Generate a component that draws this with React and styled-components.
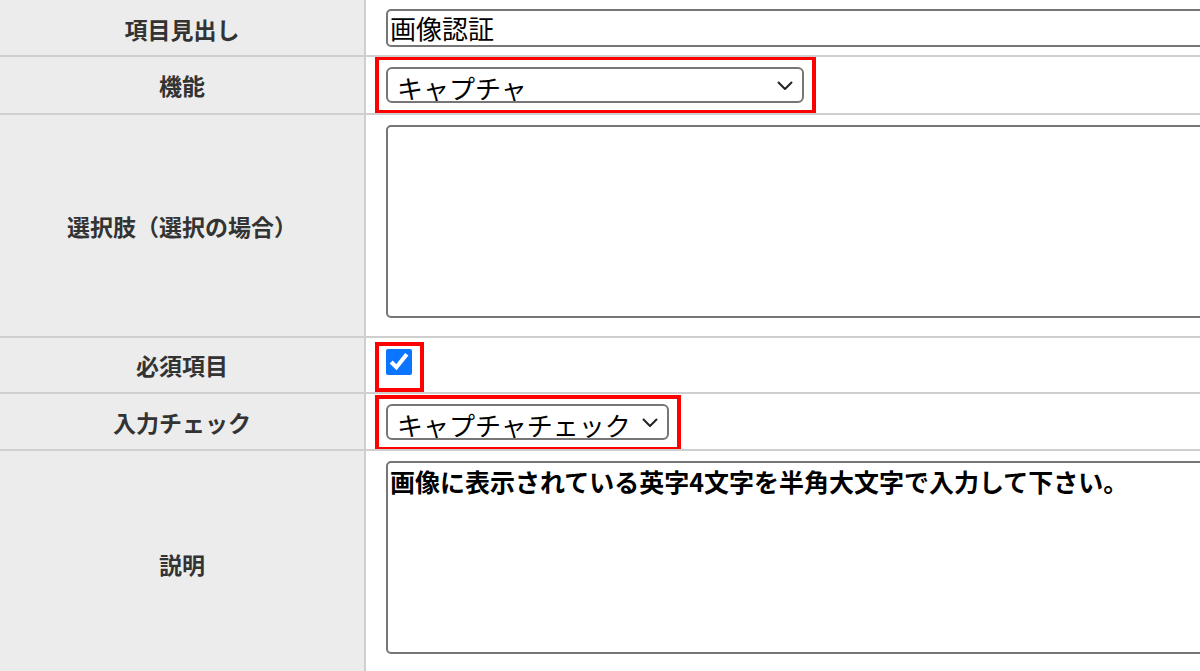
import React from 'react';
import styled, { createGlobalStyle } from 'styled-components';

const GlobalStyle = createGlobalStyle`
  html, body {
    margin: 0;
    padding: 0;
    background: #fff;
    overflow: hidden;
  }
  body {
    font-family: 'Noto Sans CJK JP', 'Noto Sans', sans-serif;
  }
`;

const Form = styled.div`
  display: grid;
  grid-template-columns: 366px 1fr;
  grid-template-rows: 57px 58px 223px 56px 57px 228px;
  width: 1200px;
`;

const Label = styled.div`
  box-sizing: border-box;
  display: flex;
  align-items: center;
  justify-content: center;
  padding-top: ${(p) => p.$shift || 0}px;
  background: #ececec;
  border-right: 2px solid #cfcfcf;
  border-bottom: 2px solid #cfcfcf;
  color: #333;
  font-size: 23px;
  font-weight: 700;
  white-space: nowrap;
`;

const Field = styled.div`
  box-sizing: border-box;
  display: flex;
  align-items: ${(p) => (p.$top ? 'flex-start' : 'center')};
  padding: ${(p) => (p.$top ? '10px 0 0 20px' : '0 0 0 20px')};
  border-bottom: 2px solid #cfcfcf;
  overflow: hidden;
  min-width: 0;
`;

const TextInput = styled.input`
  box-sizing: border-box;
  flex: none;
  width: 1000px;
  height: 38px;
  padding: 0 2px;
  border: 2px solid #767676;
  border-radius: 5px;
  font-family: 'Noto Sans CJK JP', sans-serif;
  font-size: 26px;
  color: #000;
  background: #fff;
  outline: none;
`;

const Marked = styled.span`
  position: relative;
  display: inline-flex;
  flex: none;

  &::after {
    content: '';
    position: absolute;
    top: -${(p) => p.$top || 11}px;
    right: -12px;
    bottom: -11px;
    left: -11px;
    border: 4px solid #ff0000;
    pointer-events: none;
  }
`;

const SelectWrap = styled.span`
  position: relative;
  display: inline-flex;
`;

const Select = styled.select`
  box-sizing: border-box;
  appearance: none;
  width: ${(p) => p.$width}px;
  height: 36px;
  padding: 0 30px 0 9px;
  border: 2px solid #767676;
  border-radius: 6px;
  background: #fff;
  font-family: 'Noto Sans CJK JP', sans-serif;
  font-size: 26px;
  color: #000;
  outline: none;
`;

const Chevron = styled.svg`
  position: absolute;
  right: 11px;
  top: 50%;
  width: 16px;
  height: 10px;
  margin-top: -4px;
  pointer-events: none;
`;

const Check = styled.input`
  width: 26px;
  height: 26px;
  margin: 0 0 6px 0;
  accent-color: #0b75ff;
`;

const Area = styled.textarea`
  box-sizing: border-box;
  flex: none;
  width: 1000px;
  height: 193px;
  padding: 2px;
  border: 2px solid #767676;
  border-radius: 5px;
  resize: none;
  font-family: 'Noto Sans CJK JP', sans-serif;
  font-size: 25px;
  font-weight: 700;
  line-height: 1.3;
  color: #000;
  background: #fff;
  outline: none;
`;

function Dropdown({ width, value }) {
  return (
    <SelectWrap>
      <Select $width={width} defaultValue={value}>
        <option>{value}</option>
      </Select>
      <Chevron viewBox="0 0 16 10">
        <path d="M1.5 1.5 L8 8 L14.5 1.5" fill="none" stroke="#222" strokeWidth="2" strokeLinecap="round" strokeLinejoin="round" />
      </Chevron>
    </SelectWrap>
  );
}

export default function App() {
  return (
    <>
      <GlobalStyle />
      <Form>
        <Label $shift={2}>項目見出し</Label>
        <Field>
          <TextInput defaultValue="画像認証" />
        </Field>

        <Label>機能</Label>
        <Field>
          <Marked>
            <Dropdown width={418} value="キャプチャ" />
          </Marked>
        </Field>

        <Label>選択肢（選択の場合）</Label>
        <Field $top>
          <Area defaultValue="" />
        </Field>

        <Label>必須項目</Label>
        <Field>
          <Marked $top={7}>
            <Check type="checkbox" defaultChecked />
          </Marked>
        </Field>

        <Label>入力チェック</Label>
        <Field>
          <Marked $top={9}>
            <Dropdown width={283} value="キャプチャチェック" />
          </Marked>
        </Field>

        <Label>説明</Label>
        <Field $top>
          <Area defaultValue="画像に表示されている英字4文字を半角大文字で入力して下さい。" />
        </Field>
      </Form>
    </>
  );
}
